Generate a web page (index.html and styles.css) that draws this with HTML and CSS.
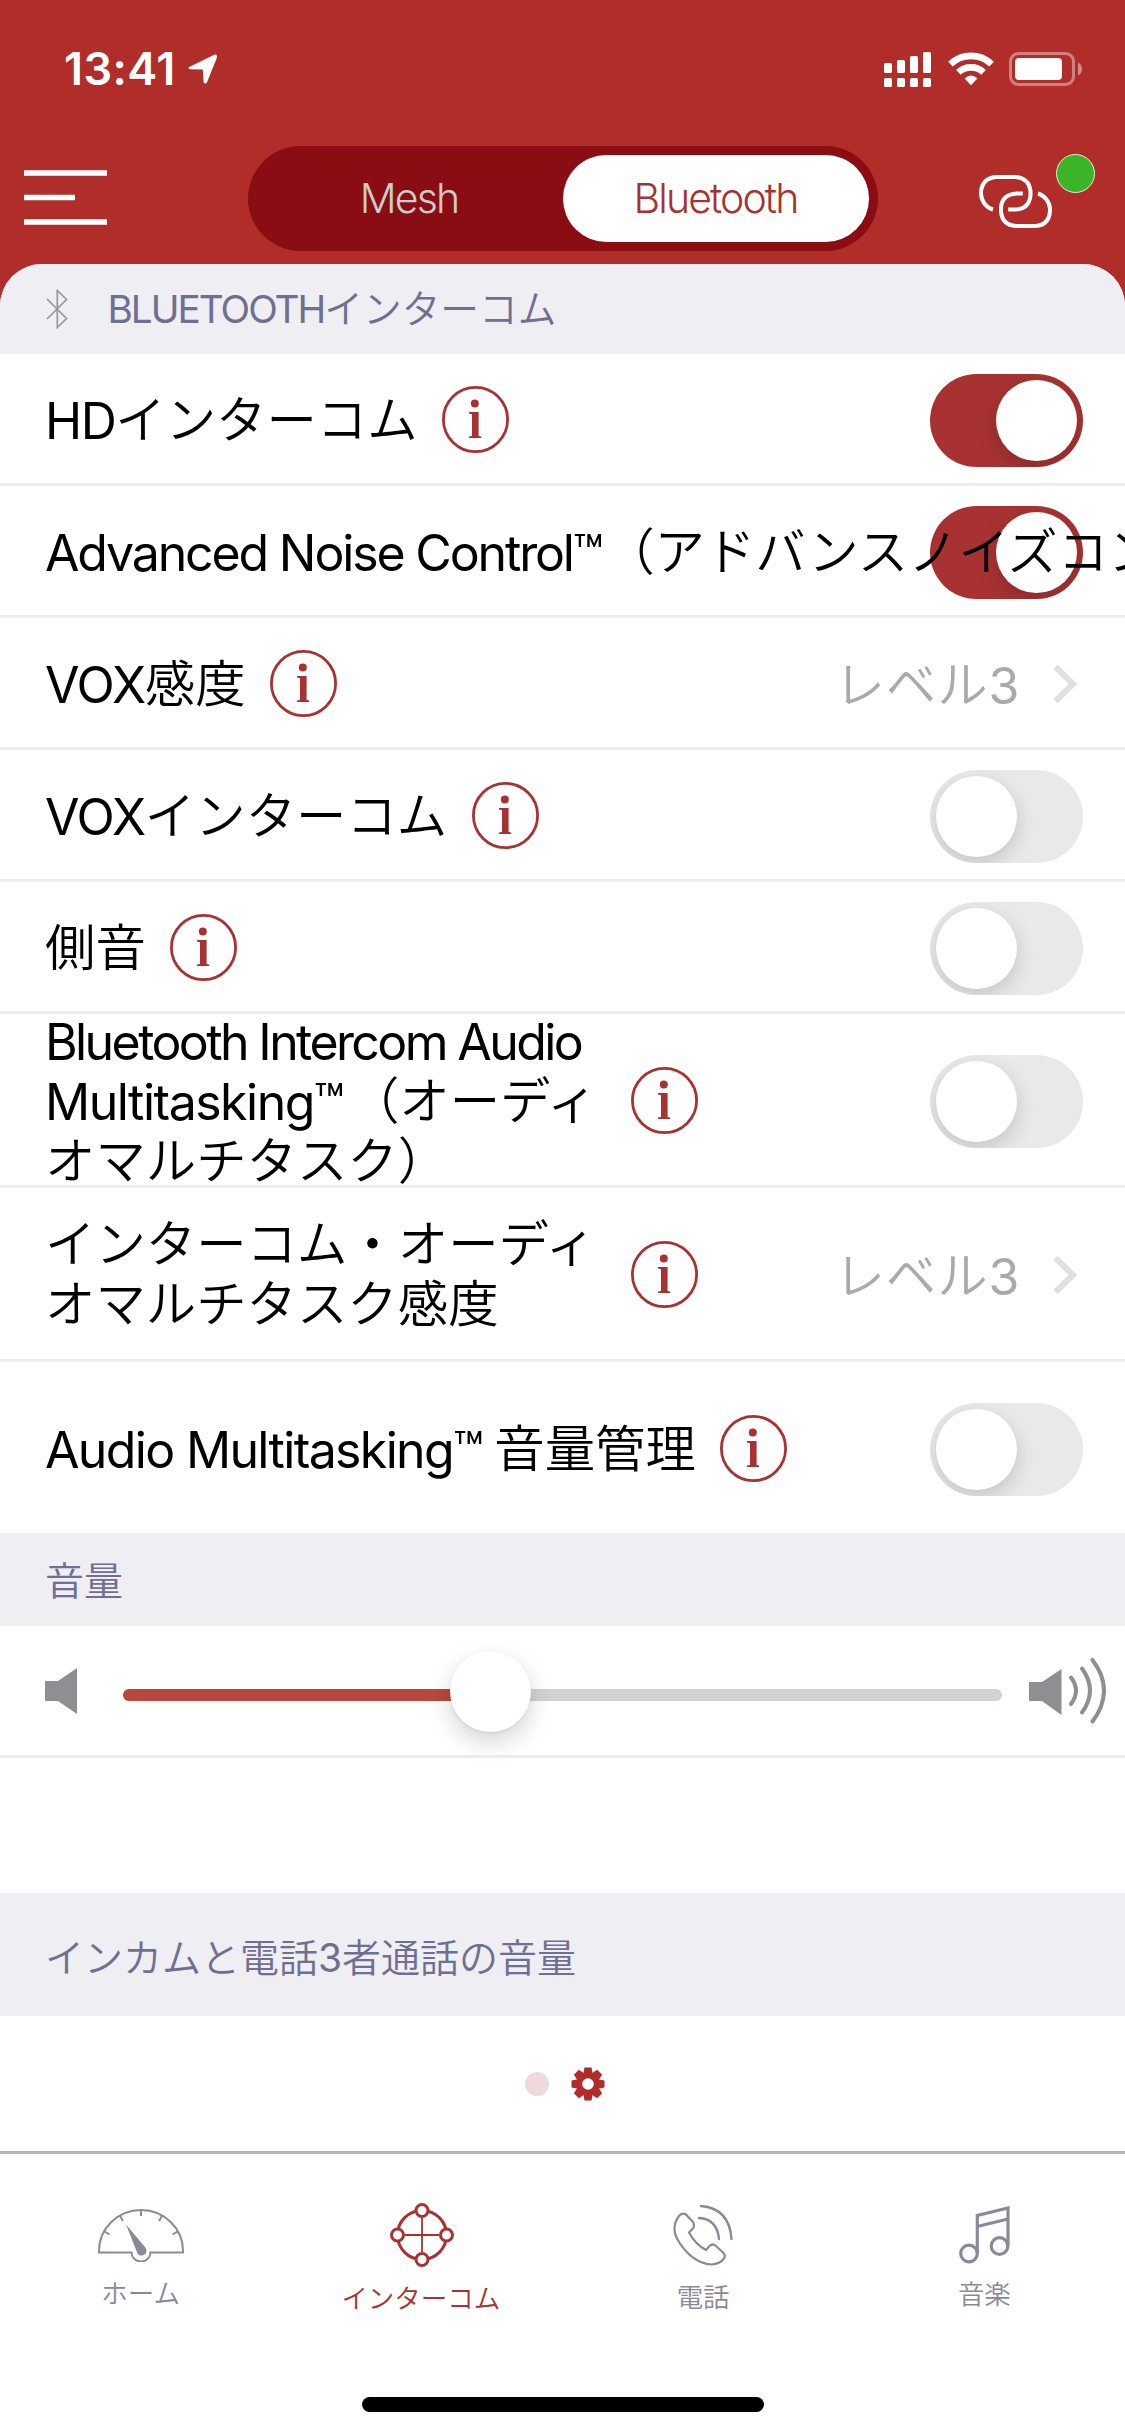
FILE: index.html
```html
<!DOCTYPE html>
<html lang="ja">
<head>
<meta charset="utf-8">
<title>Bluetoothインターコム</title>
<link rel="stylesheet" href="styles.css">
</head>
<body>
<svg class="defs" width="0" height="0">
  <symbol id="info" viewBox="0 0 67 67">
    <circle cx="33.5" cy="33.5" r="32.1" fill="none" stroke="#a83232" stroke-width="2.8"/>
    <circle cx="32.8" cy="17.4" r="4" fill="#a83232"/>
    <path d="M27 26H36.6V50L39.2 50.4V52H27V50.4L30 50V28.2L27 27.6Z" fill="#a83232"/>
  </symbol>
  <symbol id="chevron" viewBox="0 0 25 38">
    <path d="M2.5 2L20 19L2.5 36" fill="none" stroke="#e0e0e0" stroke-width="6"/>
  </symbol>
</svg>
<div class="screen">
  <header class="top">
    <div class="status">
      <span class="time">13:41</span>
      <svg class="loc" width="30" height="30" viewBox="0 0 30 30"><path d="M2.2 12.4L26.2.8Q29.6-.2 29 3.4L19 28.2Q17.6 30.6 15.6 28.6L14.8 15.6L2 15.2Q-1.2 14 2.2 12.4Z" fill="#fff"/></svg>
      <svg class="signal" width="198" height="36" viewBox="884 51 198 36">
        <g fill="#fff">
          <rect x="884" y="63" width="8" height="10" rx="1.6"/><rect x="897" y="60" width="8" height="13" rx="1.6"/><rect x="910" y="56" width="8" height="17" rx="1.6"/><rect x="923" y="52" width="8" height="21" rx="1.6"/>
          <rect x="884" y="78" width="8" height="9" rx="1.6"/><rect x="897" y="78" width="8" height="9" rx="1.6"/><rect x="910" y="78" width="8" height="9" rx="1.6"/><rect x="923" y="78" width="8" height="9" rx="1.6"/>
          <path d="M971 85.2L964.6 78.6Q971 72.6 977.4 78.6Z"/>
        </g>
        <path d="M950.4 64.2A29.6 29.6 0 0 1 991.6 64.2M958.4 72.4A18.2 18.2 0 0 1 983.6 72.4" fill="none" stroke="#fff" stroke-width="6.6"/>
        <rect x="1010.5" y="53.5" width="63" height="31" rx="8" fill="none" stroke="#fff" stroke-opacity=".4" stroke-width="3"/>
        <rect x="1015" y="58" width="47" height="22" rx="4" fill="#fff"/>
        <path d="M1078 62.5Q1082 64.5 1082 69T1078 75.5Z" fill="#fff" fill-opacity=".45"/>
      </svg>
    </div>
    <nav class="bar">
      <svg class="menu" width="83" height="55" viewBox="0 0 83 55"><path d="M0 3H83M0 27.5H51M0 52H83" stroke="#fff" stroke-width="5.4"/></svg>
      <div class="segment">
        <span class="seg mesh">Mesh</span>
        <span class="seg active">Bluetooth</span>
      </div>
      <div class="link">
        <svg width="73" height="53" viewBox="979 175 73 53"><path d="M993 209.5A17 17 0 0 1 981 193.5V191.5Q982.500 178 996 177H1015Q1029 178 1030.500 191V195.500Q1029 209 1015.500 209.500H1008.200M1022.800 193.500H1016.500Q1002 194.500 1001 207.500V211.500Q1002 225 1016 226H1035.500Q1049 225 1050 211V208.500A17 17 0 0 0 1038 193.500" fill="none" stroke="#fff" stroke-width="4"/></svg>
        <i class="dot-on"></i>
      </div>
    </nav>
  </header>

  <main class="panel">
    <h2 class="section first">
      <svg width="22" height="40" viewBox="0 0 22 40"><path d="M1 10L20.500 29.500L11.300 38.500V1.500L20.500 10.500L1 30" fill="none" stroke="#98989e" stroke-width="1.700"/></svg>
      <span><b class="en">BLUETOOTH</b>インターコム</span>
    </h2>
    <div class="row"><span class="label"><b class="en hd">HD</b>インターコム</span><svg class="info"><use href="#info"/></svg><i class="toggle on"></i></div>
    <div class="row"><span class="label over"><b class="en anc">Advanced Noise Control™</b>（アドバンスノイズコントロール）</span><i class="toggle on"></i></div>
    <div class="row"><span class="label"><b class="en vox">VOX</b>感度</span><svg class="info"><use href="#info"/></svg><span class="value">レベル<b class="en">3</b></span><svg class="chev"><use href="#chevron"/></svg></div>
    <div class="row"><span class="label"><b class="en vox">VOX</b>インターコム</span><svg class="info"><use href="#info"/></svg><i class="toggle"></i></div>
    <div class="row"><span class="label">側音</span><svg class="info"><use href="#info"/></svg><i class="toggle"></i></div>
    <div class="row tall"><span class="label wide three"><b class="en bia">Bluetooth Intercom Audio</b><br><b class="en mul">Multitasking™</b>（オーディ<br>オマルチタスク）</span><svg class="info"><use href="#info"/></svg><i class="toggle"></i></div>
    <div class="row tall"><span class="label wide two">インターコム・オーディ<br>オマルチタスク感度</span><svg class="info"><use href="#info"/></svg><span class="value">レベル<b class="en">3</b></span><svg class="chev"><use href="#chevron"/></svg></div>
    <div class="row tall"><span class="label"><b class="en aud">Audio Multitasking™ </b>音量管理</span><svg class="info"><use href="#info"/></svg><i class="toggle"></i></div>
    <h2 class="section">音量</h2>
    <div class="row volume">
      <svg width="32" height="46" viewBox="0 0 32 46"><path d="M0 13H13L32 0V46L13 33H0Z" fill="#8e8e93"/></svg>
      <div class="slider"><div class="fill"></div><div class="knob"></div></div>
      <svg width="77" height="66" viewBox="0 0 77 66"><path d="M0 24H13L32.500 11V57L13 43H0Z" fill="#8e8e93"/><path d="M42 19.500Q52 32.500 42 46M53 10.500Q69 32.500 53 54.500M63.500 2Q86.500 32.500 63.500 63.500" fill="none" stroke="#8e8e93" stroke-width="4" stroke-linecap="round"/></svg>
    </div>
    <div class="blank"></div>
    <h2 class="section last"><span>インカムと電話<b class="en">3</b>者通話の音量</span></h2>
    <div class="pager">
      <i class="page"></i>
      <svg width="34" height="34" viewBox="-17 -17 34 34">
        <g fill="#b02c2a">
          <path id="tooth" d="M-3.500-16.500H3.500L5-9H-5Z"/>
          <use href="#tooth" transform="rotate(45)"/><use href="#tooth" transform="rotate(90)"/><use href="#tooth" transform="rotate(135)"/><use href="#tooth" transform="rotate(180)"/><use href="#tooth" transform="rotate(225)"/><use href="#tooth" transform="rotate(270)"/><use href="#tooth" transform="rotate(315)"/>
        </g>
        <circle r="11.500" fill="#b02c2a"/><circle r="5.800" fill="#fff"/>
      </svg>
    </div>
  </main>

  <footer class="tabs">
    <div class="tab home">
      <svg width="86" height="53" viewBox="98 2209 86 53"><g fill="none" stroke="#8e8799" stroke-width="2"><path d="M131.500 2252.500H99V2251A42 41 0 0 1 183 2251V2252.500H150.500A9.300 8.800 0 0 1 131.500 2252.500Z"/><path d="M141 2211V2216M162 2216L159 2221M120 2216L123 2221M177.500 2231.500L172.500 2234.500M104.500 2231.500L109.500 2234.500"/></g><path d="M126 2224.500L145 2247A5 5 0 1 1 136.500 2251Z" fill="#8e8799"/></svg>
      <span>ホーム</span>
    </div>
    <div class="tab intercom">
      <svg width="64" height="64" viewBox="-32 -32 64 64"><g fill="none" stroke="#a83232"><path d="M0-17V17M-17 0H17" stroke-width="1.800"/><circle r="24.500" stroke-width="3"/></g><g fill="#fff" stroke="#a83232" stroke-width="3"><circle cy="-24.500" r="6"/><circle cy="24.500" r="6"/><circle cx="-24.500" r="6"/><circle cx="24.500" r="6"/></g></svg>
      <span>インターコム</span>
    </div>
    <div class="tab phone">
      <svg width="60" height="62" viewBox="673.500 2204.500 60 62"><g fill="none" stroke="#8e8799" stroke-width="2.200" stroke-linecap="round" stroke-linejoin="round"><path d="M686.500 2215Q682.500 2212.500 679.500 2216.500Q671.500 2227.500 677.500 2239C685 2253 698 2264.500 712 2265Q720.500 2264.500 724.500 2259Q726.500 2256 723.500 2253L716.500 2246.500Q713 2243.500 710 2246.500L706.500 2250.500Q696 2245 689.500 2233L693.500 2229Q695.500 2226 693.500 2222.500Z"/><path d="M699.500 2218.500Q717.500 2219.500 719.500 2239.500M701.500 2206.500Q730 2209 732 2239.500" stroke-width="2.400"/></g></svg>
      <span>電話</span>
    </div>
    <div class="tab music">
      <svg width="51" height="58" viewBox="958.500 2206.500 51 58"><g fill="none" stroke="#8e8799" stroke-width="3.200"><circle cx="968.500" cy="2254" r="8.300"/><circle cx="999" cy="2246.500" r="8.300"/><path d="M976.800 2254V2216L1007.500 2208.500V2246.500M976.800 2227L1007.500 2219.500"/></g></svg>
      <span>音楽</span>
    </div>
    <div class="indicator"></div>
  </footer>
</div>
</body>
</html>
```

FILE: styles.css
```css
* { box-sizing: border-box; }
body { margin: 0; }
.defs { position: absolute; }
.screen {
  width: 1125px;
  height: 2436px;
  display: flex;
  flex-direction: column;
  overflow: hidden;
  background: #b02d2a;
  font-family: "Noto Sans CJK JP", sans-serif;
  font-weight: 350;
}
svg { display: block; flex: none; }
b.en { font-family: Inter, sans-serif; font-weight: 400; }

.top { height: 264px; display: flex; flex-direction: column; }
.status { height: 146px; display: flex; align-items: flex-start; padding: 0 43px 0 64px; }
.time {
  width: 124px;
  margin-top: 42px;
  font: 600 45px/54px Inter, sans-serif;
  letter-spacing: 0.4px;
  color: #fff;
  white-space: nowrap;
}
.loc { margin-top: 54px; }
.signal { margin: 51px 0 0 auto; }
.bar { display: flex; align-items: flex-start; padding-left: 24px; }
.menu { margin: 24px 141px 0 0; }
.segment {
  width: 630px;
  height: 105px;
  padding: 9px 9px 9px 0;
  display: flex;
  border-radius: 53px;
  background: #890d12;
}
.seg {
  flex: 1;
  border-radius: 44px;
  text-align: center;
  font: 300 41px/87px Inter, sans-serif;
  letter-spacing: -1.900px;
}
.mesh { color: #ccc; padding-left: 7px; }
.active { flex: 0 0 306px; padding-right: 1px; background: #fff; color: #a83232; }
.link { margin: 8px 0 0 101px; display: flex; align-items: flex-start; gap: 4px; }
.link svg { margin-top: 21px; }
.dot-on { width: 39px; height: 39px; border-radius: 50%; background: #3cb427; border: 1.500px solid #e0efd9; }

.panel { height: 1890px; border-radius: 42px 42px 0 0; background: #fff; overflow: hidden; border-bottom: 3px solid #b5b5b5; }
.section {
  margin: 0;
  height: 90px;
  padding: 0 0 6px 45px;
  display: flex;
  align-items: center;
  background: #eeeef3;
  color: #6f6f94;
  font-size: 39px;
  font-weight: 350;
  line-height: 60px;
}
.section.first { gap: 39.500px; padding: 0 0 3px 46px; }
.section.first svg { margin-top: 3px; }
.section.first span { font-size: 38.700px; }
.section.first .en { letter-spacing: -2px; }
.section.last { height: 123px; padding: 4px 0 0 45px; }

.row {
  height: 132px;
  display: flex;
  align-items: center;
  padding: 0 42px 0 45px;
  border-bottom: 3px solid #eee;
}
.row.tall { height: 174px; }
.label { font-size: 50.400px; line-height: 60px; margin-top: -3px; white-space: nowrap; color: #000; }
.label .en, .value .en { font-size: 50px; letter-spacing: -1.500px; line-height: 46px; vertical-align: -1px; }
.label .anc { letter-spacing: -2.150px; margin-right: 3px; }
.label .bia { letter-spacing: -2.600px; }
.label .mul { margin-right: 6px; }
.label .aud { letter-spacing: -1.650px; }
.label .vox { letter-spacing: -1.200px; }
.over { flex: 1 1 0; min-width: 0; position: relative; z-index: 1; }
.wide { width: 561px; }
.two { margin-top: -6px; }
.info { width: 67px; height: 67px; margin-left: 24.500px; margin-top: 2px; }
.wide + .info { margin-left: 25px; }
.toggle {
  flex: none;
  position: relative;
  width: 153px;
  height: 93px;
  margin: 4px 0 0 auto;
  border-radius: 47px;
  background: #e9e9e9;
  overflow: hidden;
}
.toggle::before {
  content: "";
  position: absolute;
  left: 6px;
  top: 6px;
  width: 81px;
  height: 81px;
  border-radius: 50%;
  background: #fff;
  box-shadow: 0 7px 20px rgba(0, 0, 0, .16);
}
.toggle.on { background: #a83232; }
.toggle.on::before { left: 66px; }
.value { margin: -2px 0 0 auto; font-size: 50.400px; letter-spacing: 1px; line-height: 60px; color: #a9a9ae; }
.chev { width: 25px; height: 38px; margin: 3px 5px 0 35px; }

.volume { padding: 0 19px 0 45px; gap: 27px; }
.volume > svg:first-child { margin-right: 19px; }
.slider { flex: 1; height: 12px; margin-top: 9px; border-radius: 6px; background: #d1d1d6; position: relative; }
.fill { width: 360px; height: 12px; border-radius: 6px; background: #b8473f; }
.knob {
  position: absolute;
  left: 327px;
  top: -38px;
  width: 81px;
  height: 81px;
  border-radius: 50%;
  background: #fff;
  box-shadow: 0 10px 24px rgba(0, 0, 0, .17), 0 1px 3px rgba(0, 0, 0, .08);
}
.blank { height: 135px; }
.pager { height: 135px; display: flex; justify-content: center; align-items: center; gap: 22px; padding-left: 5px; }
.page { width: 24px; height: 24px; border-radius: 50%; background: #f0d9db; }

.tabs { flex: 1; position: relative; display: flex; background: #fff; }
.tab { flex: 1; display: flex; flex-direction: column; align-items: center; color: #8e8799; font-size: 26.500px; line-height: 36px; }
.home { padding-top: 55px; gap: 12px; }
.intercom { padding-top: 49px; gap: 12px; color: #a83232; }
.intercom span { margin-right: 2px; }
.phone { padding-top: 50px; gap: 12px; }
.music { padding-top: 52px; gap: 11px; }
.indicator { position: absolute; left: 362px; bottom: 24px; width: 402px; height: 15px; border-radius: 8px; background: #000; }
```
